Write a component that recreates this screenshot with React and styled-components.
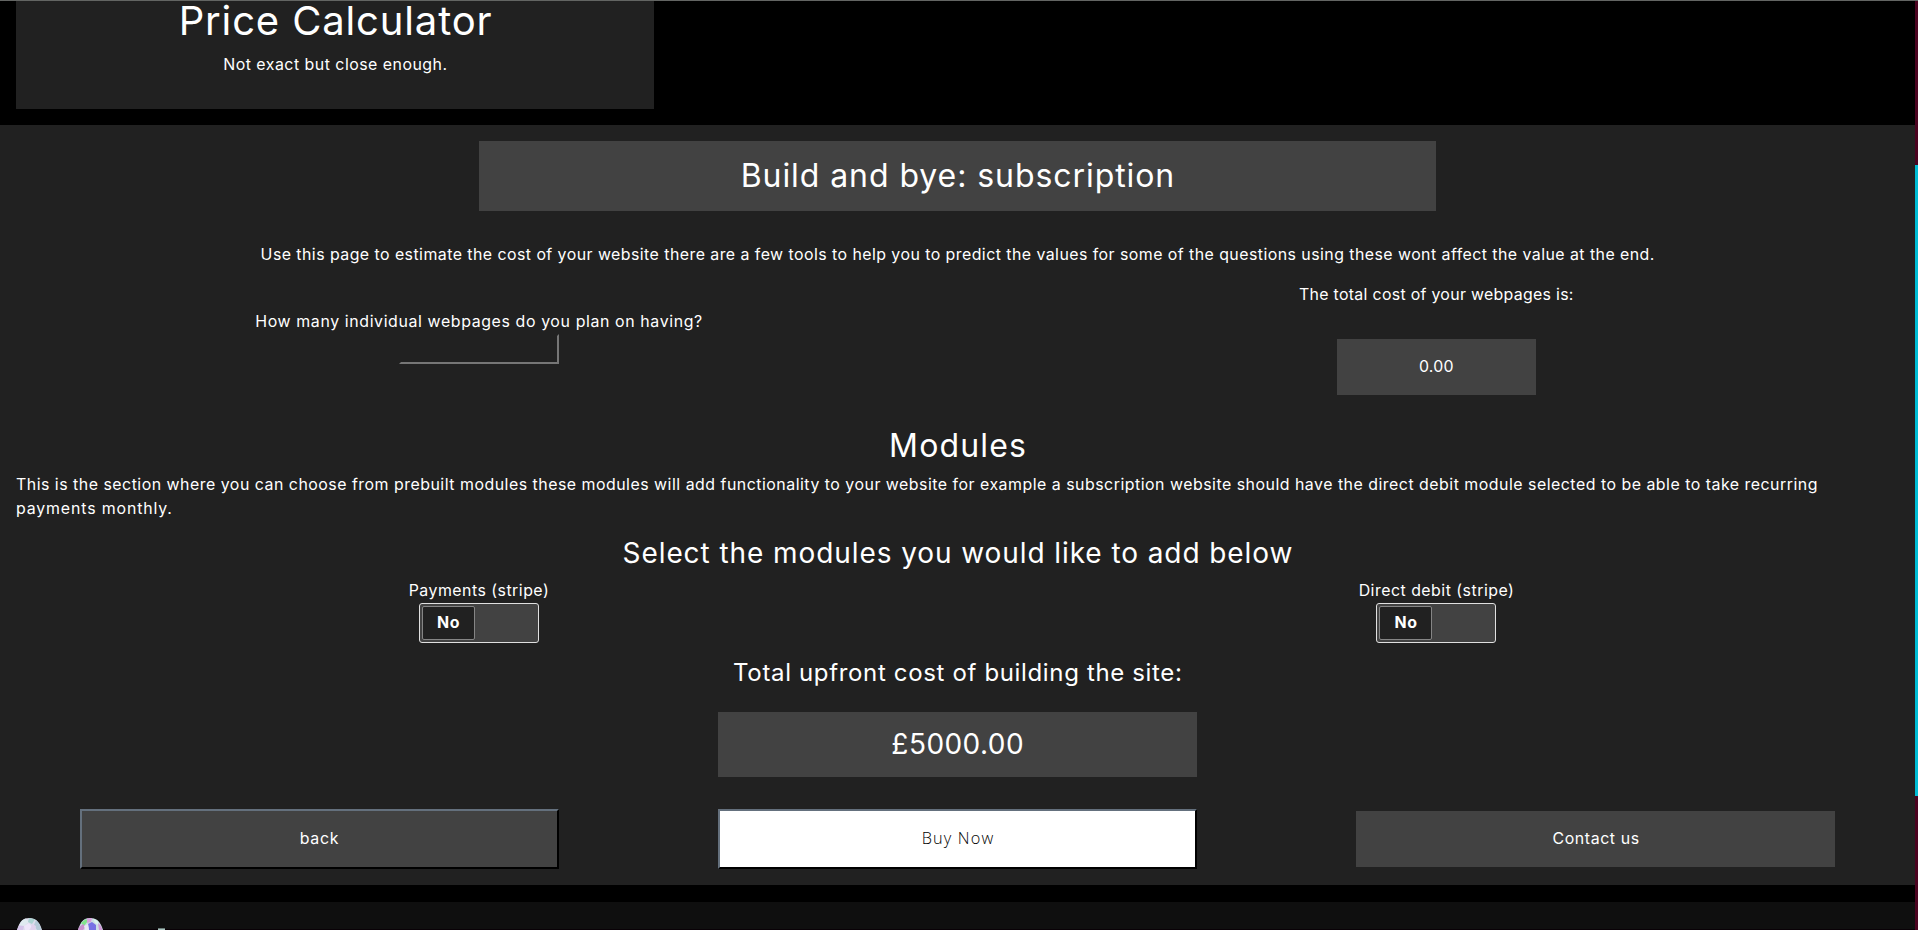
import React from "react";
import styled, { createGlobalStyle, css } from "styled-components";

const GlobalStyle = createGlobalStyle`
  *, *::before, *::after { box-sizing: border-box; }
  html, body { margin: 0; background: #000; overflow: hidden; }
  body {
    font-family: Inter, "Open Sans", sans-serif;
    font-size: 15.9px;
    line-height: 24px;
    color: #fff;
  }
`;

const Window = styled.div`
  display: grid;
  grid-template-columns: minmax(0, 1fr) 3px;
  height: 930px;
  overflow: hidden;
`;

const TopEdge = styled.div`
  position: absolute;
  inset: 0 0 auto 0;
  height: 1px;
  background: #636563;
`;

const Page = styled.div`
  display: flex;
  flex-direction: column;
  min-width: 0;
  height: 930px;
  overflow: hidden;
`;

const ScrollTrack = styled.div`
  background: #4b0320;
  padding-top: 165px;
`;

const ScrollThumb = styled.div`
  height: 631px;
  background: #00bcd4;
`;

/* The indent balances the trailing space that tracking adds to centred text. */
const tracked = css`
  letter-spacing: ${(p) => p.$track || 0}px;
  text-indent: ${(p) => (p.$left ? 0 : p.$track || 0)}px;
`;

const Text = styled.p`
  margin: 0;
  text-align: ${(p) => (p.$left ? "left" : "center")};
  ${tracked}
`;

const LastLine = styled.span`
  letter-spacing: 0.86px;
`;

const headingSizes = {
  1: ["40px", "48px"],
  2: ["32px", "38.4px"],
  3: ["28px", "33.6px"],
  4: ["24px", "28.8px"],
};

const Heading = styled.div`
  margin: 0;
  font-size: ${(p) => headingSizes[p.$level][0]};
  line-height: ${(p) => headingSizes[p.$level][1]};
  font-weight: 400;
  text-align: center;
  ${tracked}
`;

const Hero = styled.header`
  flex: none;
  display: flex;
  flex-direction: column;
  justify-content: flex-end;
  gap: 8px;
  width: 33.3333%;
  height: 108.7px;
  margin: 0 0 16px 16px;
  padding-bottom: 32px;
  background: #212121;
`;

const Calculator = styled.main`
  flex: none;
  height: 760.3px;
  padding-top: 16px;
  background: #212121;
`;

const Banner = styled.div`
  width: 50%;
  margin: 0 auto 31.6px;
  padding: 16px;
  background: #424242;
`;

const SplitRow = styled.div`
  display: grid;
  grid-template-columns: 1fr 1fr;
`;

const Cell = styled.div`
  display: flex;
  flex-direction: column;
  align-items: center;
  padding-top: ${(p) => p.$top || 0}px;
`;

const PagesRow = styled(SplitRow)`
  height: 144.2px;
  margin-top: 16px;
`;

const NumberField = styled.input`
  width: 160px;
  height: 30px;
  margin: 0;
  padding: 1px 2px;
  background: transparent;
  color: #fff;
  font: inherit;
  outline: none;
  border: 2px solid #767676;
  border-top-color: #212121;
  border-left-color: #212121;
`;

const ValueBox = styled.div`
  width: 199px;
  margin-top: 32px;
  padding: 16px;
  text-align: center;
  background: #424242;
  ${tracked}
`;

const ModulesIntro = styled.div`
  padding: 8px 16px 16px;
`;

const ModulesRow = styled(SplitRow)`
  margin: 8px 0 16px;
`;

const Toggle = styled.div`
  display: flex;
  width: 120px;
  height: 40px;
  margin-top: 0.5px;
  padding: 2px;
  border: 1px solid #e0e0e0;
  border-radius: 3px;
  background: #424242;
`;

const ToggleKnob = styled.span`
  display: flex;
  align-items: center;
  justify-content: center;
  width: 53px;
  height: 34px;
  border: 1px solid #858585;
  border-radius: 2px;
  background: #212121;
  font-weight: 700;
  ${tracked}
`;

const TotalBox = styled.div`
  width: 25%;
  margin: 24px auto 31.4px;
  padding: 16px 16px 15.4px;
  background: #424242;
`;

const Actions = styled.div`
  display: grid;
  grid-template-columns: repeat(3, 25%);
  justify-content: space-around;
  align-items: center;
`;

const Action = styled.button`
  height: ${(p) => (p.$flat ? 56 : 60)}px;
  padding: 0;
  font: inherit;
  color: #fff;
  background: #424242;
  border-style: solid;
  border-width: ${(p) => (p.$flat ? 0 : 2)}px;
  border-color: #64707d #000 #000 #64707d;
  ${tracked}
`;

const PrimaryAction = styled(Action)`
  font-family: "Open Sans", sans-serif;
  font-size: 16.3px;
  font-weight: 300;
  padding-bottom: 1px;
  color: #000;
  background: #fff;
`;

const Footer = styled.footer`
  flex: none;
  display: flex;
  align-items: flex-start;
  gap: 36px;
  height: 28px;
  margin-top: 17px;
  padding: 16px 17px 0;
  background: #0f0f0f;
  border-bottom: 1px solid #090106;
`;

const GemIcon = styled.svg`
  flex: none;
  width: 25px;
  height: 12px;
`;

const MarkIcon = styled.svg`
  flex: none;
  width: 7px;
  height: 2px;
  margin: 10px 0 0 19px;
`;

const dome = "M0 12C1 8 3 4 5 2.4C7 .7 9.4 0 12.3 0C15.5 0 18 1 20 2.7C22.5 5 24 8.5 25 12Z";

function PaleGem() {
  return (
    <GemIcon viewBox="0 0 25 12">
      <path d={dome} fill="#dcdcec" />
      <path d="M5 2.4L9 .5L12 4L7 8L2 7.5Z" fill="#dfeaf0" />
      <path d="M12 0L18 1.3L15 6L11 4Z" fill="#acd3d3" />
      <path d="M19 2L22.5 6L24.5 12H20L17 7Z" fill="#b5cad8" />
      <path d="M7 8L12 5L15 9L12 12H8Z" fill="#eee5fa" />
      <path d="M2 7.5L7 8L6 12H0Z" fill="#d5c4ea" />
      <path d="M15 6L19 8L18 12H13Z" fill="#e0d2ee" />
    </GemIcon>
  );
}

function VividGem() {
  return (
    <GemIcon viewBox="0 0 25 12">
      <path d={dome} fill="#cbdde5" />
      <path d="M3 5L8 1L10 3L6 8Z" fill="#81e58b" />
      <path d="M9 .6L14 0L13 4L9 5Z" fill="#d7a0dc" />
      <path d="M15 .5L20 3L21 7L17 5Z" fill="#d9f3ed" />
      <path d="M1 9L5 6L8 9L5 12H0Z" fill="#c993cf" />
      <path d="M10 6L14 4L18 7V12H11Z" fill="#7771e4" />
      <path d="M20 5L23 8L24.6 12H21Z" fill="#cf98d8" />
      <path d="M6 8L10 6L11 12H7Z" fill="#e9e6f5" />
    </GemIcon>
  );
}

function ModuleSwitch({ label, track }) {
  return (
    <Cell>
      <Text $track={track}>{label}</Text>
      <Toggle role="switch" aria-checked="false">
        <ToggleKnob $track={0.6}>No</ToggleKnob>
      </Toggle>
    </Cell>
  );
}

export default function App() {
  return (
    <Window>
      <GlobalStyle />
      <Page>
        <Hero>
          <Heading as="h1" $level={1} $track={0.86}>Price Calculator</Heading>
          <Text $track={0.49}>Not exact but close enough.</Text>
        </Hero>

        <Calculator>
          <Banner>
            <Heading as="h2" $level={2} $track={0.93}>Build and bye: subscription</Heading>
          </Banner>
          <Text $track={0.454}>
            Use this page to estimate the cost of your website there are a few tools to help you to
            predict the values for some of the questions using these wont affect the value at the end.
          </Text>

          <PagesRow>
            <Cell $top={27}>
              <Text $track={0.62}>How many individual webpages do you plan on having?</Text>
              <NumberField aria-label="Number of webpages" />
            </Cell>
            <Cell>
              <Text $track={0.3}>The total cost of your webpages is:</Text>
              <ValueBox $track={0.3}>0.00</ValueBox>
            </Cell>
          </PagesRow>

          <Heading as="h2" $level={2} $track={1.15}>Modules</Heading>
          <ModulesIntro>
            <Text $left $track={0.503}>
              This is the section where you can choose from prebuilt modules these modules will add
              functionality to your website for example a subscription website should have the direct
              debit module selected to be able to take recurring <LastLine>payments monthly.</LastLine>
            </Text>
          </ModulesIntro>

          <Heading as="h3" $level={3} $track={0.92}>Select the modules you would like to add below</Heading>
          <ModulesRow>
            <ModuleSwitch label="Payments (stripe)" track={0.48} />
            <ModuleSwitch label="Direct debit (stripe)" track={0.49} />
          </ModulesRow>

          <Heading as="h4" $level={4} $track={0.65}>Total upfront cost of building the site:</Heading>
          <TotalBox>
            <Heading $level={3} $track={0.45}>£5000.00</Heading>
          </TotalBox>

          <Actions>
            <Action $track={0.7}>back</Action>
            <PrimaryAction $track={1.15}>Buy Now</PrimaryAction>
            <Action $flat $track={0.6}>Contact us</Action>
          </Actions>
        </Calculator>

        <Footer>
          <PaleGem />
          <VividGem />
          <MarkIcon viewBox="0 0 7 2">
            <path d="M0 .4H7V2H0Z" fill="#a9c4bf" />
          </MarkIcon>
        </Footer>
      </Page>
      <ScrollTrack>
        <ScrollThumb />
      </ScrollTrack>
      <TopEdge />
    </Window>
  );
}
